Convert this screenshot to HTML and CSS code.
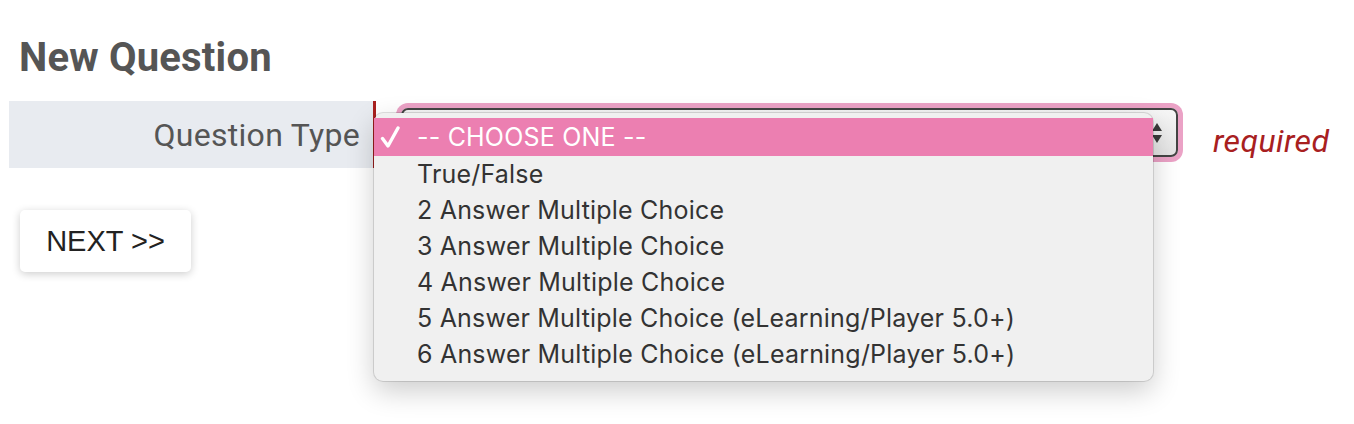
FILE: index.html
```html
<!DOCTYPE html>
<html lang="en">
<head>
    <meta charset="UTF-8">
    <title>New Question</title>
    <link rel="stylesheet" href="styles.css">
</head>
<body>

    <div class="page">
        <h2>New Question</h2>

        <div class="form-row">
            <div class="form-label">Question Type</div>
            <div class="form-field">
                <div class="select-box">
                    <span class="select-arrows">
                        <svg width="10" height="24" viewBox="0 0 10 24">
                            <path d="M0 10 L5 2 L10 10 Z" fill="#3a3a3a"/>
                            <path d="M0 14 L5 22 L10 14 Z" fill="#3a3a3a"/>
                        </svg>
                    </span>
                </div>
                <span class="required">required</span>

                <!-- open dropdown menu -->
                <ul class="select-menu">
                    <li class="selected">
                        <svg class="check" width="20" height="24" viewBox="0 0 20 24">
                            <path d="M2.5 13.5 L8 21 L18 3" fill="none" stroke="#fff" stroke-width="3.4" stroke-linecap="round" stroke-linejoin="round"/>
                        </svg>-- CHOOSE ONE --
                    </li>
                    <li>True/False</li>
                    <li>2 Answer Multiple Choice</li>
                    <li>3 Answer Multiple Choice</li>
                    <li>4 Answer Multiple Choice</li>
                    <li>5 Answer Multiple Choice (eLearning/Player 5.0+)</li>
                    <li>6 Answer Multiple Choice (eLearning/Player 5.0+)</li>
                </ul>
            </div>
        </div>

        <button class="next-btn">NEXT &gt;&gt;</button>
    </div>

</body>
</html>
```

FILE: styles.css
```css
html, body {
    margin: 0;
    background: #fff;
}

body {
    font-family: Roboto, "Liberation Sans", sans-serif;
    color: #555;
}

.page {
    padding: 9px;
    min-height: 424px;
    box-sizing: border-box;
}

h2 {
    font-size: 40px;
    font-weight: 700;
    color: #555;
    margin: 23px 0 0 10px;
    line-height: 52px;
    letter-spacing: 0.2px;
}

.form-row {
    display: flex;
    margin-top: 17px;
    height: 67px;
}

.form-label {
    width: 364px;
    background: #e8ebf0;
    font-size: 32px;
    letter-spacing: 0.3px;
    display: flex;
    align-items: center;
    justify-content: flex-end;
    padding-right: 13px;
    box-sizing: border-box;
    color: #555;
}

.form-field {
    position: relative;
    flex: 1;
    display: flex;
    align-items: flex-start;
    border-left: 3px solid #a8201f;
    padding: 7px 0 0 25px;
}

.select-box {
    width: 777px;
    height: 49px;
    border: 2px solid #444;
    border-radius: 7px;
    background: linear-gradient(#f6f6f6, #e4e4e4);
    box-shadow: 0 0 0 5px #eba2c6;
    display: flex;
    align-items: center;
    justify-content: flex-end;
    padding-right: 14px;
    box-sizing: border-box;
}

.select-arrows {
    display: flex;
}

.required {
    font-style: italic;
    color: #a8201f;
    font-size: 32px;
    letter-spacing: 0.4px;
    margin: 14px 0 0 35px;
}

.select-menu {
    position: absolute;
    left: -2px;
    top: 12px;
    width: 779px;
    margin: 0;
    padding: 5px 0 9px;
    list-style: none;
    background: #f0f0f0;
    border-radius: 9px;
    box-shadow: 0 0 0 1px rgba(0, 0, 0, 0.12), 0 10px 28px rgba(0, 0, 0, 0.2);
    font-family: Inter, "Liberation Sans", sans-serif;
    font-size: 25px;
    letter-spacing: 0.2px;
    color: #333;
}

.select-menu li {
    height: 36px;
    line-height: 36px;
    padding-left: 43px;
    position: relative;
}

.select-menu li.selected {
    background: #ec7fb1;
    color: #fff;
    height: 38px;
    line-height: 38px;
}

.check {
    position: absolute;
    left: 6px;
    top: 7px;
}

.next-btn {
    margin: 42px 0 0 11px;
    width: 171px;
    height: 62px;
    background: #fff;
    border: none;
    border-radius: 5px;
    box-shadow: 0 2px 8px rgba(0, 0, 0, 0.2);
    font-family: "Liberation Sans", sans-serif;
    font-size: 29px;
    color: #222;
    cursor: pointer;
}
```
